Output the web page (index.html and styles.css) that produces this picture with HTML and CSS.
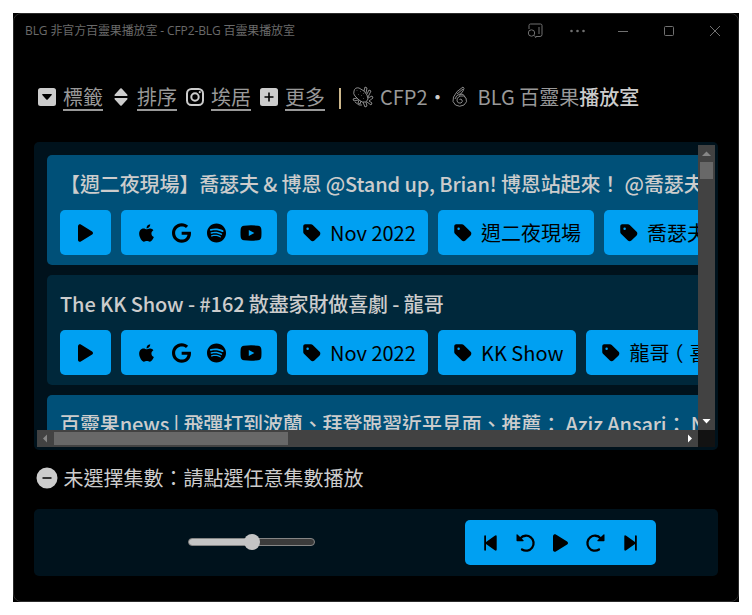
FILE: index.html
```
<!DOCTYPE html>
<html lang="zh-Hant">
<head>
<meta charset="utf-8">
<title>BLG 非官方百靈果播放室</title>
<link rel="stylesheet" href="styles.css">
</head>
<body>
<svg width="0" height="0" class="defs">
  <symbol id="play" viewBox="0 0 384 512"><path d="M73 39c-14.800-9.100-33.400-9.400-48.500-.9S0 62.600 0 80V432c0 17.400 9.400 33.400 24.500 41.900s33.700 8.100 48.500-.9L361 297c14.300-8.700 23-24.200 23-41s-8.700-32.200-23-41L73 39z"/></symbol>
  <symbol id="apple" viewBox="0 0 384 512"><path d="M318.700 268.700c-.2-36.700 16.400-64.400 50-84.800-18.800-26.900-47.200-41.700-84.700-44.600-35.500-2.800-74.300 20.700-88.500 20.700-15 0-49.400-19.700-76.400-19.700C63.300 141.200 4 184.800 4 273.500q0 39.300 14.400 81.200c12.800 36.700 59 126.700 107.200 125.200 25.200-.6 43-17.900 75.800-17.900 31.800 0 48.300 17.900 76.400 17.900 48.600-.7 90.400-82.500 102.600-119.300-65.200-30.700-61.700-90-61.700-91.900zm-56.600-164.200c27.300-32.400 24.800-61.900 24-72.500-24.100 1.400-52 16.400-67.900 34.900-17.500 19.800-27.800 44.300-25.600 71.900 26.100 2 49.900-11.400 69.500-34.300z"/></symbol>
  <symbol id="google" viewBox="0 0 488 512"><path d="M488 261.800C488 403.300 391.100 504 248 504 110.800 504 0 393.200 0 256S110.800 8 248 8c66.800 0 123 24.500 166.300 64.900l-56 56C258.500 42.600 80 110 80 256c0 92 75 170 168 170 98.200 0 143-76 150-127H248v-72h236.100c2.300 12.700 3.900 21 3.900 34.800z"/></symbol>
  <symbol id="spotify" viewBox="0 0 496 512"><path d="M248 8C111.100 8 0 119.100 0 256s111.100 248 248 248 248-111.100 248-248S384.900 8 248 8zm100.700 364.900c-4.200 0-6.800-1.300-10.700-3.600-62.400-37.600-135-39.200-206.700-24.500-3.900 1-9 2.600-11.900 2.600-9.700 0-15.800-7.700-15.800-15.800 0-10.300 6.100-15.200 13.600-16.800 81.900-18.100 165.600-16.500 237 26.200 6.100 3.900 9.700 7.400 9.700 16.500s-7.100 15.400-15.200 15.400zm26.900-65.600c-5.200 0-8.700-2.300-12.300-4.200-62.500-37-155.700-51.900-238.600-29.400-4.800 1.300-7.400 2.600-11.900 2.600-10.700 0-19.400-8.700-19.400-19.400s5.200-17.800 15.500-20.700c27.800-7.800 56.200-13.600 97.800-13.600 64.900 0 127.600 16.100 177 45.500 8.100 4.800 11.300 11 11.300 19.700-.1 10.800-8.500 19.500-19.400 19.500zm31-76.200c-5.200 0-8.400-1.300-12.900-3.900-71.200-42.500-198.500-52.700-280.900-29.700-3.600 1-8.100 2.600-12.900 2.600-13.200 0-23.300-10.300-23.300-23.600 0-13.600 8.400-21.300 17.400-23.900 35.200-10.300 74.600-15.200 117.500-15.200 73 0 149.500 15.200 205.400 47.800 7.800 4.500 12.900 10.700 12.900 22.600 0 13.600-11 23.300-23.200 23.300z"/></symbol>
  <symbol id="youtube" viewBox="0 0 22 20"><path fill-rule="evenodd" d="M4 2.700Q11 2 18 2.700Q21 3 21.300 6Q21.700 10 21.300 14Q21 17 18 17.300Q11 18 4 17.300Q1 17 .7 14Q.3 10 .7 6Q1 3 4 2.700zM8.800 6.900v6.200l5.600-3.100z"/></symbol>
  <symbol id="tag" viewBox="0 0 448 512"><path d="M0 80V229.500c0 17 6.700 33.300 18.700 45.300l176 176c25 25 65.500 25 90.500 0L418.700 317.300c25-25 25-65.500 0-90.500l-176-176c-12-12-28.300-18.700-45.300-18.700H48C21.500 32 0 53.500 0 80zm112 32a32 32 0 1 1 0 64 32 32 0 1 1 0-64z"/></symbol>
  <symbol id="step" viewBox="0 0 16 20"><path d="M1.200 3.200q0-.9.900-.9t.9.900v5.900l8.800-6.400q1.900-1 1.900.8v13q0 1.800-1.900.8L3 10.900v5.900q0 .9-.9.900t-.9-.9z"/></symbol>
  <symbol id="rotate" viewBox="0 0 20 20"><path d="M.5 2q0-1.200 1-.4l6 5.700q.7 1-.5 1H1.200q-.7 0-.7-.7z"/><path d="M4.500 5.200A7.500 7.500 0 1 1 6 16.500" fill="none" stroke="currentColor" stroke-width="2.300" stroke-linecap="round"/></symbol>
</svg>
<div class="window">
  <header class="titlebar">
    <div class="caption">BLG 非官方百靈果播放室 - CFP2-BLG 百靈果播放室</div>
    <div class="controls">
      <svg width="16" height="16" viewBox="0 0 16 16"><path d="M2 6V2.500Q2 1 3.500 1h10Q15 1 15 2.500v9q0 2-2 2H9M12 4v7M7.500 12.500L9 15"/><circle cx="4.500" cy="10" r="3.200"/></svg>
      <svg width="16" height="16" viewBox="0 0 16 16" class="dots"><circle cx="2.500" cy="8" r="1.300"/><circle cx="8.500" cy="8" r="1.300"/><circle cx="14.500" cy="8" r="1.300"/></svg>
      <svg width="16" height="16" viewBox="0 0 16 16"><path d="M3 8.500h10"/></svg>
      <svg width="16" height="16" viewBox="0 0 16 16"><rect x="3.500" y="3.500" width="9" height="9" rx="1"/></svg>
      <svg width="16" height="16" viewBox="0 0 16 16"><path d="M3 3l10 10M13 3L3 13"/></svg>
    </div>
  </header>

  <nav class="nav">
    <a class="item"><svg width="20" height="20" viewBox="0 0 20 20"><path fill-rule="evenodd" d="M3.500 1h13Q19 1 19 3.500v13Q19 19 16.500 19h-13Q1 19 1 16.500v-13Q1 1 3.500 1zM5.800 7q-1.100.1-.5 1.100l4 4.400q.7.600 1.400 0l4-4.400q.6-1-.5-1.100z"/></svg><span>標籤</span></a>
    <a class="item"><svg width="20" height="20" viewBox="0 0 20 20"><path d="M9.300 1.500q.7-.7 1.400 0l5.700 6.200q.7 1-.5 1.300H4.100q-1.200-.3-.5-1.300zM9.300 18.500q.7.700 1.400 0l5.700-6.200q.7-1-.5-1.300H4.100q-1.200.3-.5 1.300z"/></svg><span>排序</span></a>
    <a class="item"><svg width="20" height="20" viewBox="0 0 20 20"><g fill="none" stroke="currentColor" stroke-width="2"><rect x="2" y="2" width="16" height="16" rx="4.500"/><circle cx="10" cy="10" r="3.700"/></g><circle cx="14.800" cy="5.200" r="1.100"/></svg><span>埃居</span></a>
    <a class="item"><svg width="20" height="20" viewBox="0 0 20 20"><path fill-rule="evenodd" d="M3.500 1h13Q19 1 19 3.500v13Q19 19 16.500 19h-13Q1 19 1 16.500v-13Q1 1 3.500 1zM9.200 5.500v3.700H5.500v1.600h3.700v3.700h1.600v-3.700h3.700V9.200h-3.700V5.500z"/></svg><span>更多</span></a>
    <i class="divider"></i>
    <svg class="line-icon" width="22" height="22" viewBox="0 0 22 22"><path d="M2 5q1-4 5-3l5 3q4 4 4 8l-2 3q-4 1-7-2L3 10Q1 8 2 5zM5 4.500l.5.500M8 5l.5.500M6 8l.5.500M9 9l.5.500M11 7l.5.500M11 12l.5.500M12 5l1-4 2 1-1 5M15 8l2-4 2 1-3 6M16 12l4-2 1 2-4 3 3 2-1 2-4-3M14 16l1 4-2 1-2-5M9 15l-1 3-2-1 1-3M5 12l-4 1 1 2 4-1M3 16l4 3 3 0"/></svg>
    <span class="guest">CFP2</span><b class="bullet">•</b>
    <svg class="line-icon six" width="16" height="22" viewBox="0 0 16 22"><path d="M11 1Q4 5 1.500 11q-2 5 2 8 4 2.500 8.500 0 4-3 2-7-2-3-6-2-4 2-3 5 1 3 4 2 2-1 1-3-1-1.500-2.500-.5M11 1q2 1 0 4L7.500 9.500M5 8l6-5M3 13q1-4 5-5 4-.5 5 3"/></svg>
    <span class="show">BLG 百靈果<b>播放室</b></span>
  </nav>

  <section class="panel list">
    <div class="viewport">
      <article class="card bright">
        <h2>【週二夜現場】喬瑟夫 &amp; 博恩 @Stand up, Brian! 博恩站起來！ @喬瑟夫</h2>
        <div class="row">
          <button class="btn one"><svg width="15" height="20"><use href="#play"/></svg></button>
          <button class="btn links"><svg width="15" height="20"><use href="#apple"/></svg><svg width="19" height="20"><use href="#google"/></svg><svg width="19" height="20"><use href="#spotify"/></svg><svg width="22" height="20"><use href="#youtube"/></svg></button>
          <button class="btn tag month"><svg width="18" height="20"><use href="#tag"/></svg>Nov 2022</button>
          <button class="btn tag"><svg width="18" height="20"><use href="#tag"/></svg>週二夜現場</button>
          <button class="btn tag"><svg width="18" height="20"><use href="#tag"/></svg>喬瑟夫</button>
        </div>
      </article>
      <article class="card">
        <h2>The KK Show - #162 散盡家財做喜劇 - 龍哥</h2>
        <div class="row">
          <button class="btn one"><svg width="15" height="20"><use href="#play"/></svg></button>
          <button class="btn links"><svg width="15" height="20"><use href="#apple"/></svg><svg width="19" height="20"><use href="#google"/></svg><svg width="19" height="20"><use href="#spotify"/></svg><svg width="22" height="20"><use href="#youtube"/></svg></button>
          <button class="btn tag month"><svg width="18" height="20"><use href="#tag"/></svg>Nov 2022</button>
          <button class="btn tag"><svg width="18" height="20"><use href="#tag"/></svg>KK Show</button>
          <button class="btn tag"><svg width="18" height="20"><use href="#tag"/></svg><span>龍哥<span class="paren">（</span>喜劇）</span></button>
        </div>
      </article>
      <article class="card bright">
        <h2>百靈果news | 飛彈打到波蘭、拜登跟習近平見面、推薦： Aziz Ansari： Nightclub</h2>
      </article>
    </div>
    <div class="vbar"><svg width="17" height="17"><path fill="#868686" d="M4 11l4.500-4.500L13 11z"/></svg><i></i><svg width="17" height="17"><path fill="#fff" d="M4.500 6l4 4.500 4-4.500z"/></svg></div>
    <div class="hbar"><svg width="17" height="17"><path fill="#868686" d="M10 4.500L6 8.500l4 4z"/></svg><i></i><svg width="17" height="17"><path fill="#fff" d="M7 4.500l4 4-4 4z"/></svg></div>
    <div class="corner"></div>
  </section>

  <div class="status"><svg width="22" height="22" viewBox="0 0 22 22"><path fill-rule="evenodd" d="M11 .5a10.500 10.500 0 1 1 0 21a10.500 10.500 0 1 1 0-21zM6.500 10.200v1.600h9v-1.600z"/></svg><span>未選擇集數：請點選任意集數播放</span></div>

  <section class="panel player">
    <div class="range"><i class="fill"></i><i class="thumb"></i></div>
    <button class="btn deck">
      <svg width="16" height="20"><use href="#step"/></svg>
      <svg width="20" height="20"><use href="#rotate"/></svg>
      <svg width="15" height="20"><use href="#play"/></svg>
      <svg class="flip" width="20" height="20"><use href="#rotate"/></svg>
      <svg class="flip" width="16" height="20"><use href="#step"/></svg>
    </button>
  </section>
</div>
</body>
</html>
```
FILE: styles.css
```
* { box-sizing: border-box; }
body {
  margin: 0;
  padding: 13px;
  background: #fff;
  color: #ccc;
  font: 20px/30px "Noto Sans CJK TC", sans-serif;
  overflow: hidden;
}
.defs { position: absolute; }
svg { display: block; flex: none; fill: currentColor; }
.window {
  width: 726px;
  height: 589px;
  background: #000;
  display: flex;
  flex-direction: column;
  border: 1px solid #2b2b2b;
  border-radius: 8px;
}
body::before {
  content: "";
  position: absolute;
  z-index: -1;
  left: 13px;
  top: 13px;
  width: 726px;
  height: 589px;
  background: #000;
}
.titlebar {
  height: 34px;
  padding: 0 15px 0 11px;
  display: flex;
  align-items: center;
  justify-content: space-between;
  color: #6a6a6a;
}
.caption { font: 12px/18px "Open Sans", "Noto Sans CJK TC", sans-serif; letter-spacing: -0.12px; white-space: nowrap; }
.controls { display: flex; gap: 30px; }
.controls svg { fill: none; stroke: #707070; }
.controls svg:first-child { margin-right: -4px; }
.controls .dots { fill: #707070; stroke: none; }

.nav {
  height: 30px;
  margin: 34px 0 0 22.5px;
  display: flex;
  align-items: center;
  color: #999;
  white-space: nowrap;
}
.item { display: flex; align-items: center; width: 74px; gap: 6.5px; }
.item svg { color: #ccc; }
.item span { height: 28px; line-height: 27px; border-bottom: 2px solid #999; margin-top: -1px; }
.divider { width: 2px; height: 21px; margin: 2px 11px 0 6.5px; background: #ccb78c; }
.line-icon { fill: none; stroke: #999; stroke-width: .9; }
.guest { margin-left: 6px; }
.bullet { color: #ccc; width: 20px; text-align: center; font-weight: 400; }
.six { margin: 0 10px 0 4px; }
.show b { color: #ccc; font-weight: 500; }

.panel { margin: 0 20px; background: #00121c; border-radius: 5px; }
.list {
  margin-top: 30px;
  height: 308px;
  padding: 3px;
  display: grid;
  grid-template: 285px 17px / 661px 17px;
}
.viewport { overflow: hidden; padding: 10px 0 0 10px; }
.card {
  width: 1100px;
  height: 110px;
  margin-bottom: 10px;
  padding: 13px;
  border-radius: 5px;
  background: #00283b;
}
.bright { background: #005078; }
.card h2 { margin: 0 0 10px; font-size: 20px; font-weight: 500; line-height: 32px; letter-spacing: -0.12px; white-space: nowrap; }
.row { display: flex; gap: 10px; }
.btn {
  height: 45px;
  border: 0;
  border-radius: 5px;
  background: #00a0f2;
  color: #000;
  font: inherit;
  display: flex;
  align-items: center;
  flex: none;
  white-space: nowrap;
}
.one { width: 51px; padding: 0 0 0 18px; }
.links { width: 156px; padding: 0 0 0 18px; }
.links svg { margin-right: 16px; }
.links svg:first-child { margin-right: 18px; }
.links svg:last-child { margin: 0 0 0 -2px; }
.tag { padding: 0 13px 0 16px; gap: 9px; }
.month { width: 141px; }
.paren { position: relative; left: -6px; }
.vbar, .hbar { background: #424242; display: flex; }
.vbar { flex-direction: column; }
.vbar i { width: 13px; height: 17px; margin: 0 2px auto; background: #686868; }
.hbar i { width: 234px; height: 13px; margin: 2px auto 2px 0; background: #686868; }
.corner { background: #121212; }

.status { height: 30px; margin: 13px 0 0 21.5px; display: flex; align-items: center; gap: 6px; }
.player {
  height: 67px;
  margin-top: 16px;
  display: flex;
  align-items: center;
}
.range {
  position: relative;
  width: 127px;
  height: 8px;
  margin: 0 150px 2px 154px;
  border: 1px solid #858585;
  border-radius: 4px;
  background: #3b3b3b;
}
.fill { display: block; width: 64px; height: 6px; border-radius: 4px 0 0 4px; background: #c4c4c4; }
.thumb { position: absolute; left: 55px; top: -5px; width: 16px; height: 16px; border-radius: 50%; background: #c4c4c4; }
.deck { width: 191px; padding: 0 18px 0 17.5px; justify-content: space-between; }
.flip { transform: scaleX(-1); }
```
